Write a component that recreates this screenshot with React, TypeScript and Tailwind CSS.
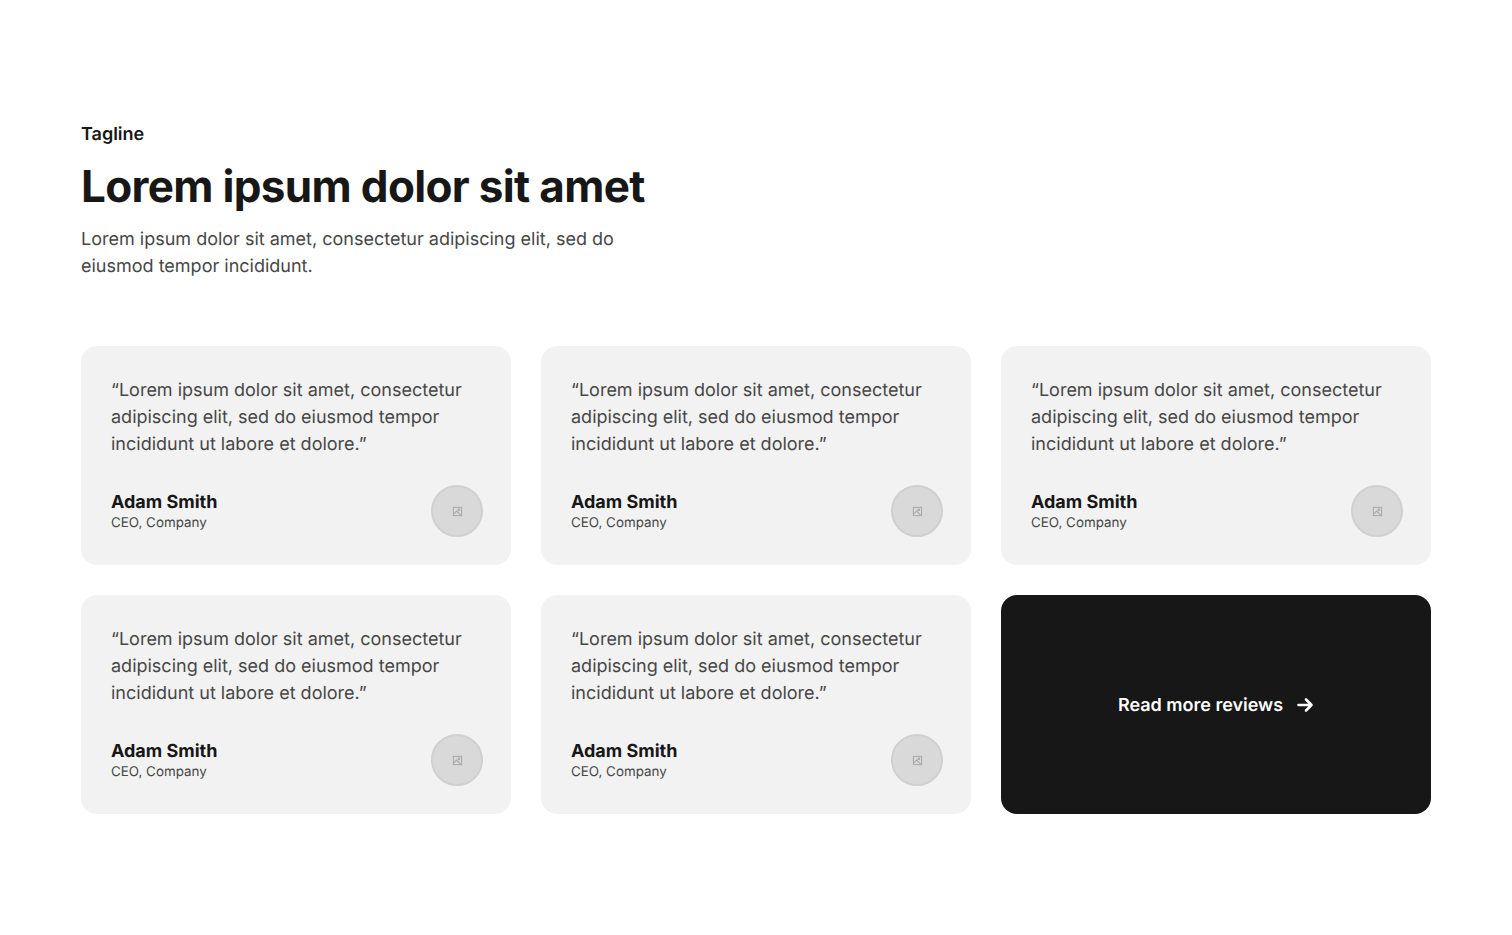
import React from "react";

function Avatar() {
  return (
    <div className="flex h-[52px] w-[52px] shrink-0 items-center justify-center rounded-full border-2 border-[#d0d0d0] bg-[#d9d9d9]">
      <svg width="11" height="11" viewBox="0 0 12 12" fill="none" stroke="#a8a8a8" strokeWidth="1.1">
        <rect x="1.5" y="1.5" width="9" height="9" />
        <circle cx="7.5" cy="4.2" r="1" />
        <path d="M2 8.5 L5 5.5 L9.5 10" />
      </svg>
    </div>
  );
}

function Card() {
  return (
    <div className="flex h-[219px] flex-col justify-between rounded-[16px] bg-[#f2f2f2] pb-[28px] pl-[30px] pr-[28px] pt-[31px]">
      <p className="text-[18px] leading-[27px] text-[#474747]">
        “Lorem ipsum dolor sit amet, consectetur adipiscing elit, sed do eiusmod tempor incididunt ut labore et dolore.”
      </p>
      <div className="flex items-center justify-between">
        <div className="flex flex-col">
          <span className="text-[18px] font-bold leading-[24px] text-[#171717]">Adam Smith</span>
          <span className="text-[13.4px] leading-[17px] text-[#474747]">CEO, Company</span>
        </div>
        <Avatar />
      </div>
    </div>
  );
}

export default function App() {
  return (
    <div className="min-h-[935px] bg-white pl-[81px] pr-[81px] pt-[121px] font-['Inter',sans-serif] [text-rendering:geometricPrecision]">
      <p className="text-[18px] font-semibold leading-[27px] text-[#171717]">Tagline</p>
      <h1 className="mt-[14px] text-[44px] font-bold leading-[48px] tracking-[-0.66px] text-[#171717]">Lorem ipsum dolor sit amet</h1>
      <p className="mt-[16px] w-[600px] text-[18px] leading-[27px] text-[#474747]">
        Lorem ipsum dolor sit amet, consectetur adipiscing elit, sed do eiusmod tempor incididunt.
      </p>
      <div className="mt-[66px] grid grid-cols-3 gap-[30px]">
        <Card />
        <Card />
        <Card />
        <Card />
        <Card />
        <div className="flex h-[219px] items-center justify-center gap-[12px] rounded-[16px] bg-[#171717]">
          <span className="pl-[1px] pt-[1px] text-[18px] font-semibold leading-[27px] text-white">Read more reviews</span>
          <svg width="20" height="20" viewBox="0 0 20 20" fill="none" stroke="white" strokeWidth="2.6" strokeLinecap="round" strokeLinejoin="round">
            <path d="M3.5 10H16.5M11 4.5L16.5 10L11 15.5" />
          </svg>
        </div>
      </div>
    </div>
  );
}
